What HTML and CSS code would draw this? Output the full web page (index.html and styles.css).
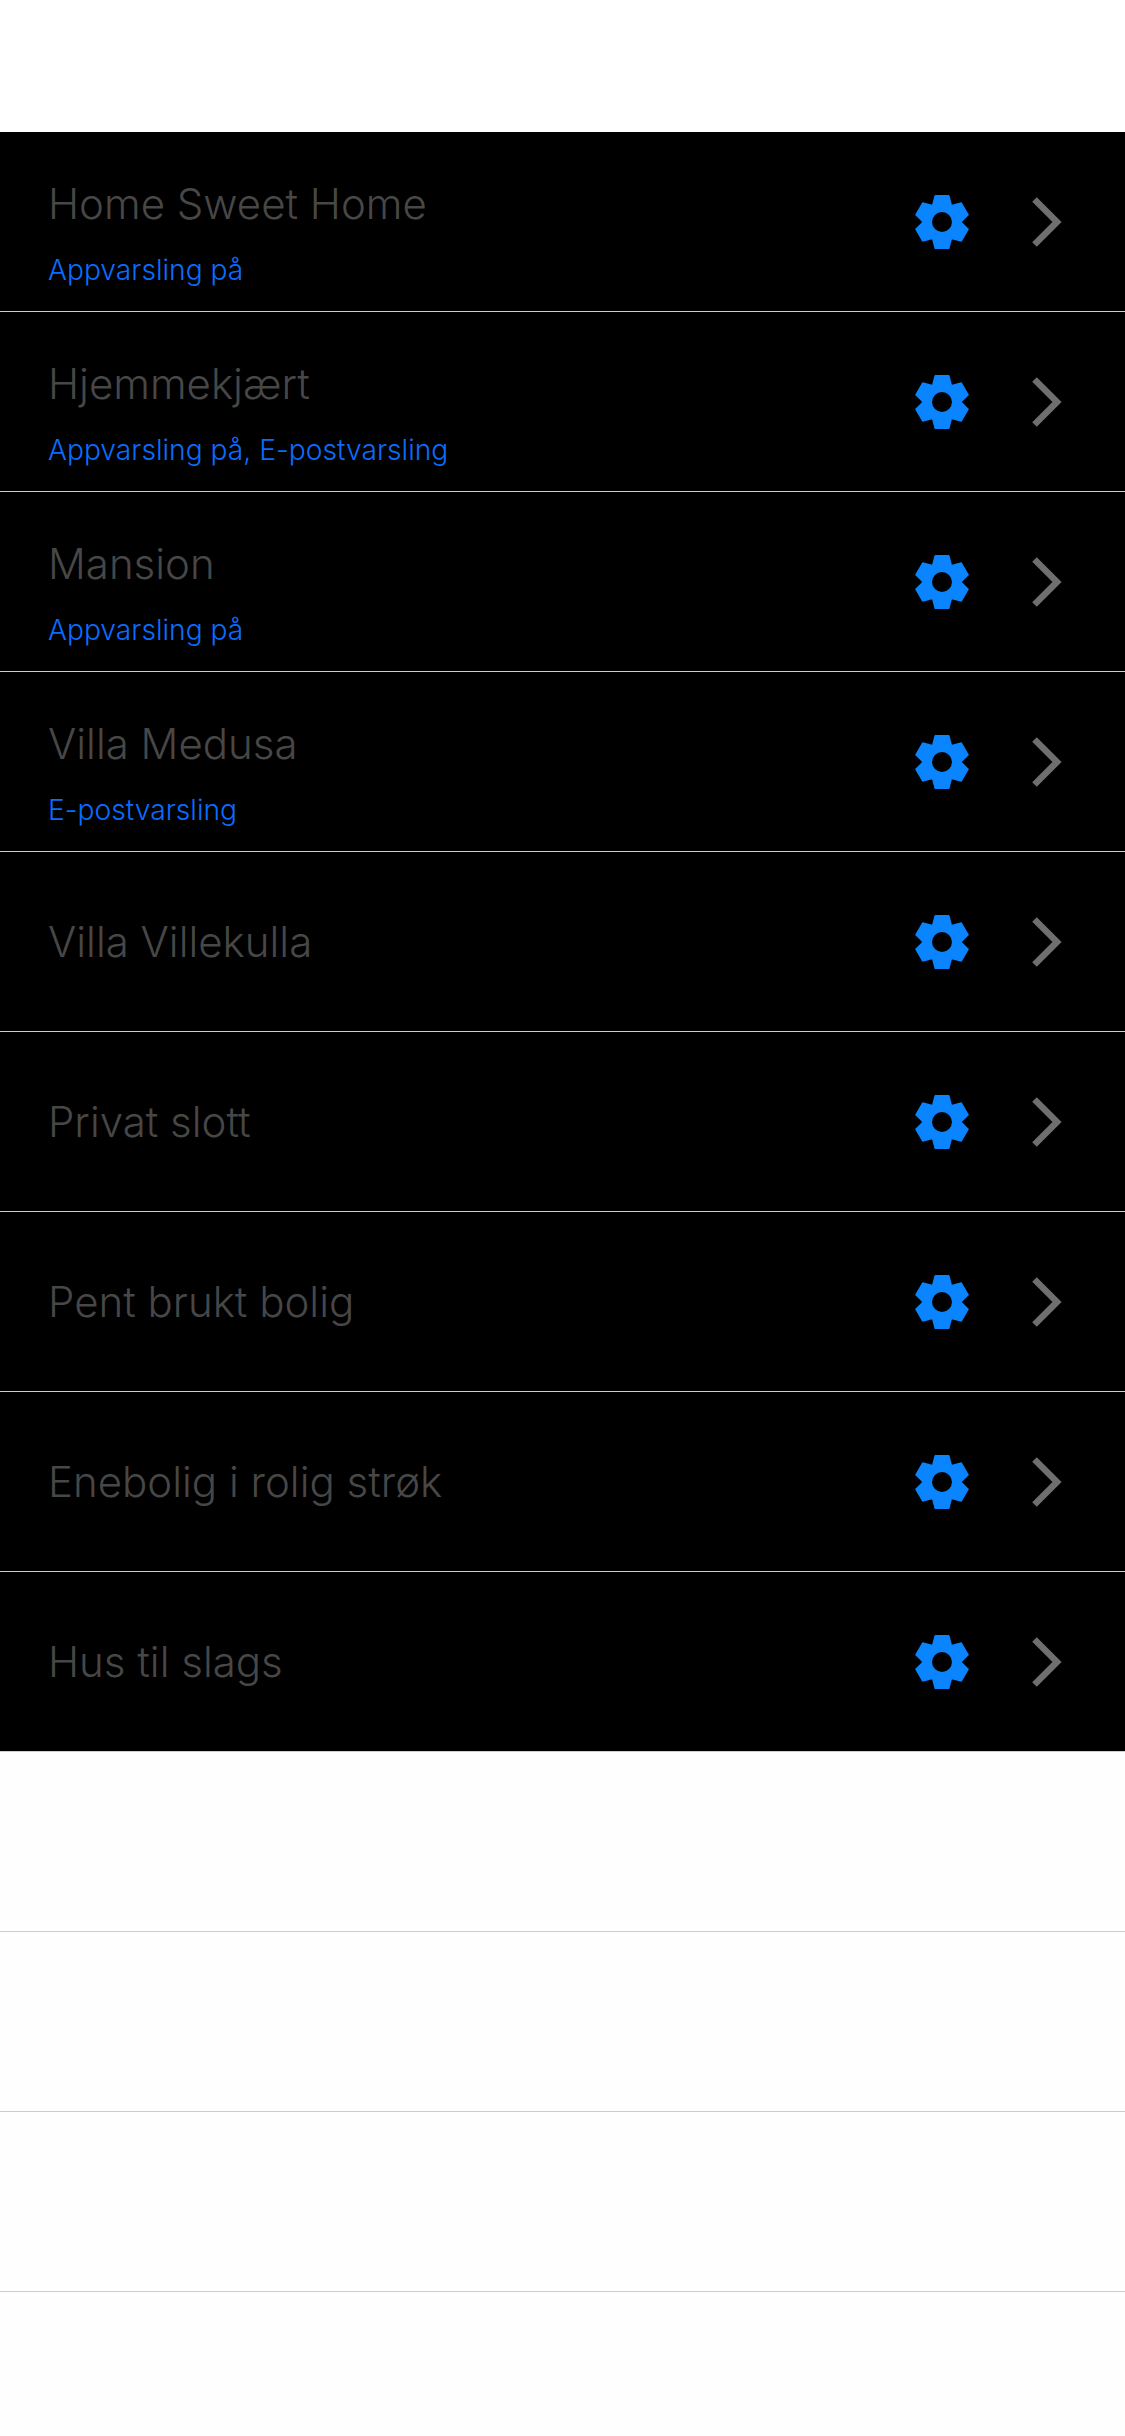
FILE: index.html
```html
<!DOCTYPE html>
<html lang="en">
<head>
    <meta charset="UTF-8">
    <meta name="viewport" content="width=device-width, initial-scale=1.0">
    <title>Hjem</title>
    <link rel="stylesheet" href="styles.css">
</head>
<body>

<svg class="icon-defs" width="0" height="0">
    <symbol id="gear" viewBox="-28 -28 56 56">
        <path fill-rule="evenodd" stroke-width="1.5" stroke-linejoin="round" transform="scale(0.97)" d="M-9.5 -17.5 L-7 -27 L7 -27 L9.5 -17.5 L10.4 -17 L19.9 -19.6 L26.9 -7.4 L19.9 -.5 L19.9 .5 L26.9 7.4 L19.9 19.6 L10.4 17 L9.5 17.5 L7 27 L-7 27 L-9.5 17.5 L-10.4 17 L-19.9 19.6 L-26.9 7.4 L-19.9 .5 L-19.9 -.5 L-26.9 -7.4 L-19.9 -19.6 L-10.4 -17 Z M11 0 A11 11 0 1 0 -11 0 A11 11 0 1 0 11 0 Z"/>
    </symbol>
    <symbol id="chevron" viewBox="0 0 34 54">
        <path d="M4.5 4.5 L27 27 L4.5 49.5" fill="none" stroke-width="6.5"/>
    </symbol>
</svg>

<div class="topbar"></div>

<ul class="home-list">
    <li class="home-row">
        <div class="home-text has-alert">
            <div class="home-name">Home Sweet Home</div>
            <div class="home-alert">Appvarsling på</div>
        </div>
        <svg class="gear"><use href="#gear"/></svg>
        <svg class="chevron"><use href="#chevron"/></svg>
    </li>
    <li class="home-row">
        <div class="home-text has-alert">
            <div class="home-name">Hjemmekjært</div>
            <div class="home-alert">Appvarsling på, E-postvarsling</div>
        </div>
        <svg class="gear"><use href="#gear"/></svg>
        <svg class="chevron"><use href="#chevron"/></svg>
    </li>
    <li class="home-row">
        <div class="home-text has-alert">
            <div class="home-name">Mansion</div>
            <div class="home-alert">Appvarsling på</div>
        </div>
        <svg class="gear"><use href="#gear"/></svg>
        <svg class="chevron"><use href="#chevron"/></svg>
    </li>
    <li class="home-row">
        <div class="home-text has-alert">
            <div class="home-name">Villa Medusa</div>
            <div class="home-alert">E-postvarsling</div>
        </div>
        <svg class="gear"><use href="#gear"/></svg>
        <svg class="chevron"><use href="#chevron"/></svg>
    </li>
    <li class="home-row">
        <div class="home-text">
            <div class="home-name">Villa Villekulla</div>
        </div>
        <svg class="gear"><use href="#gear"/></svg>
        <svg class="chevron"><use href="#chevron"/></svg>
    </li>
    <li class="home-row">
        <div class="home-text">
            <div class="home-name">Privat slott</div>
        </div>
        <svg class="gear"><use href="#gear"/></svg>
        <svg class="chevron"><use href="#chevron"/></svg>
    </li>
    <li class="home-row">
        <div class="home-text">
            <div class="home-name">Pent brukt bolig</div>
        </div>
        <svg class="gear"><use href="#gear"/></svg>
        <svg class="chevron"><use href="#chevron"/></svg>
    </li>
    <li class="home-row">
        <div class="home-text">
            <div class="home-name">Enebolig i rolig strøk</div>
        </div>
        <svg class="gear"><use href="#gear"/></svg>
        <svg class="chevron"><use href="#chevron"/></svg>
    </li>
    <li class="home-row">
        <div class="home-text">
            <div class="home-name">Hus til slags</div>
        </div>
        <svg class="gear"><use href="#gear"/></svg>
        <svg class="chevron"><use href="#chevron"/></svg>
    </li>
</ul>

<div class="empty-list">
    <div class="empty-row"></div>
    <div class="empty-row"></div>
    <div class="empty-row"></div>
</div>

</body>
</html>
```

FILE: styles.css
```css
html, body {
    margin: 0;
    padding: 0;
    background-color: #fefefe;
}
body {
    font-family: Inter, "Noto Sans", sans-serif;
    height: 2436px;
    overflow: hidden;
}
.icon-defs {
    display: block;
    height: 0;
}
.topbar {
    height: 132px;
    background-color: #fff;
}
.home-list {
    list-style: none;
    margin: 0;
    padding: 0;
    background-color: #000;
}
.home-row {
    box-sizing: border-box;
    height: 180px;
    display: flex;
    align-items: center;
    padding: 0 61px 0 48px;
    border-bottom: 1px solid #c8ced6;
}
.home-text {
    flex: 1;
    display: flex;
    flex-direction: column;
    gap: 21.5px;
}
.has-alert {
    padding-top: 21px;
}
.home-name {
    font-size: 42px;
    line-height: 54px;
    font-weight: 270;
    color: #474747;
}
.home-alert {
    font-size: 28.2px;
    line-height: 34px;
    font-weight: 350;
    color: #0a6cff;
}
.gear {
    width: 56px;
    height: 56px;
    fill: #0a84ff;
    stroke: #0a84ff;
}
.chevron {
    width: 34px;
    height: 54px;
    margin-left: 60px;
    stroke: #6f6f6f;
}
.empty-row {
    box-sizing: border-box;
    height: 180px;
    border-bottom: 1px solid #c8ced6;
}
```
